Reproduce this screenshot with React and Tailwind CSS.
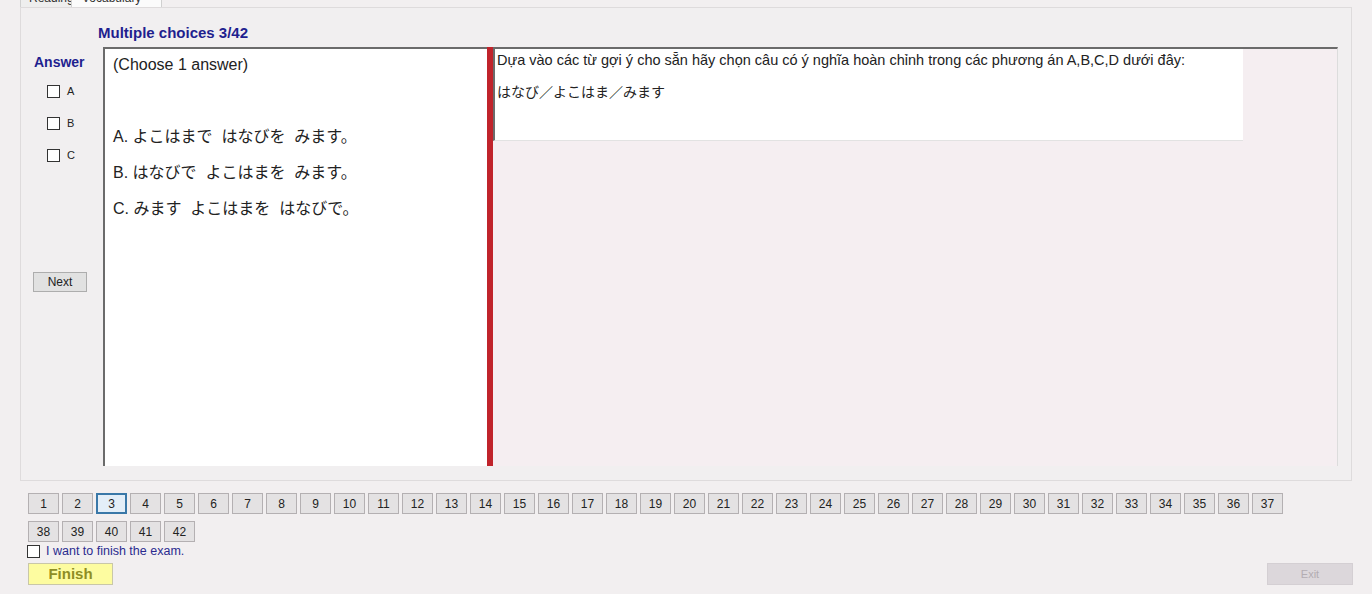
import React from "react";

const F = { fontFamily: '"Liberation Sans", Arial, "Noto Sans CJK JP", sans-serif' };

function PageBtn({ n, active }) {
  return (
    <div
      className={
        "w-[31px] h-[21px] flex items-center justify-center text-[12px] text-[#222] " +
        (active
          ? "border-2 border-[#3a78a8] bg-[#e3eef8]"
          : "border border-[#b4b0b2] bg-[#e4e2e3]")
      }
    >
      {n}
    </div>
  );
}

function Check({ label }) {
  return (
    <div className="flex items-center h-[14px]">
      <div className="w-[13px] h-[13px] border border-[#333] bg-white" />
      <span className="ml-[7px] text-[11px] text-[#222] leading-none">{label}</span>
    </div>
  );
}

export default function App() {
  const row1 = Array.from({ length: 37 }, (_, i) => i + 1);
  const row2 = [38, 39, 40, 41, 42];
  return (
    <div style={F} className="w-[1372px] h-[594px] bg-[#f2eff0] overflow-hidden">
      {/* tabs strip */}
      <div className="h-[7px] flex pl-[20px] overflow-hidden">
        <div className="w-[52px] h-[7px] border-x border-[#d0d0d0] bg-[#eeeeee] overflow-hidden">
          <div className="-mt-[9px] pl-[8px] text-[12px] text-[#333] leading-[14px]">Reading</div>
        </div>
        <div className="w-[90px] h-[7px] border-r border-[#d0d0d0] bg-[#fbfbfb] overflow-hidden">
          <div className="-mt-[9px] pl-[10px] text-[12px] text-[#333] leading-[14px]">Vocabulary</div>
        </div>
      </div>

      {/* main panel */}
      <div className="ml-[20px] w-[1332px] h-[474px] border border-[#dedbdc] bg-[#f1eff0] flex flex-col">
        <div className="h-[39px] pl-[77px] pt-[16px] text-[15px] font-bold text-[#1f1f8f] leading-[17px]">
          Multiple choices 3/42
        </div>
        <div className="flex h-[419px]">
          {/* answer column */}
          <div className="w-[82px] pl-[13px] flex flex-col">
            <div className="mt-[8px] text-[14px] font-bold text-[#1f1f8f] leading-[15px]">Answer</div>
            <div className="ml-[13px] mt-[14px] flex flex-col gap-[18px]">
              <Check label="A" />
              <Check label="B" />
              <Check label="C" />
            </div>
            <div className="mt-[110px] ml-[-1px] w-[54px] h-[20px] border border-[#adadad] bg-[#e1e1e1] flex items-center justify-center text-[12px] text-[#222]">
              Next
            </div>
          </div>
          {/* left question box */}
          <div className="w-[384px] h-[419px] bg-white border-l-2 border-t-2 border-[#6b6b6b] pl-[8px] pt-[6px]">
            <div className="text-[16px] text-[#222] leading-[20px]">(Choose 1 answer)</div>
            <div className="mt-[52px] flex flex-col gap-[16px] text-[16px] text-[#222] leading-[20px]">
              <div>A. よこはまで&nbsp;&nbsp;はなびを&nbsp;&nbsp;みます。</div>
              <div>B. はなびで&nbsp;&nbsp;よこはまを&nbsp;&nbsp;みます。</div>
              <div>C. みます&nbsp;&nbsp;よこはまを&nbsp;&nbsp;はなびで。</div>
            </div>
          </div>
          {/* splitter */}
          <div className="w-[6px] h-[419px] bg-[#c0232b]" />
          {/* right area */}
          <div className="w-[845px] h-[419px] bg-[#f5eef1] border-t-2 border-r border-t-[#6b6b6b] border-r-[#dcdcdc]">
            <div className="w-[750px] h-[92px] bg-white border-l-2 border-b border-l-[#6b6b6b] border-b-[#e2e2e2] pl-[2px] pt-[2px]">
              <div className="text-[14.5px] text-[#222] leading-[18px] whitespace-nowrap">
                Dựa vào các từ gợi ý cho sẵn hãy chọn câu có ý nghĩa hoàn chỉnh trong các phương án A,B,C,D dưới đây:
              </div>
              <div className="mt-[14px] text-[14px] text-[#222] leading-[18px]">はなび／よこはま／みます</div>
            </div>
          </div>
        </div>
      </div>

      {/* pagination */}
      <div className="pl-[28px] mt-[12px] flex flex-col gap-[7px]">
        <div className="flex gap-[3px]">
          {row1.map((n) => (
            <PageBtn key={n} n={n} active={n === 3} />
          ))}
        </div>
        <div className="flex gap-[3px]">
          {row2.map((n) => (
            <PageBtn key={n} n={n} />
          ))}
        </div>
      </div>

      <div className="pl-[27px] mt-[2px] flex items-center h-[14px]">
        <div className="w-[13px] h-[13px] border border-[#333] bg-white" />
        <span className="ml-[6px] text-[12.5px] text-[#2b2b8f] leading-none">I want to finish the exam.</span>
      </div>

      <div className="mt-[5px] flex justify-between pl-[28px] pr-[19px]">
        <div className="w-[85px] h-[22px] border border-[#c9c7a8] bg-[#fdfca0] flex items-center justify-center text-[15px] font-bold text-[#8e8e24]">
          Finish
        </div>
        <div className="w-[86px] h-[22px] border border-[#d4cfd3] bg-[#dcd7db] flex items-center justify-center text-[11px] text-[#b3adb2]">
          Exit
        </div>
      </div>
    </div>
  );
}
